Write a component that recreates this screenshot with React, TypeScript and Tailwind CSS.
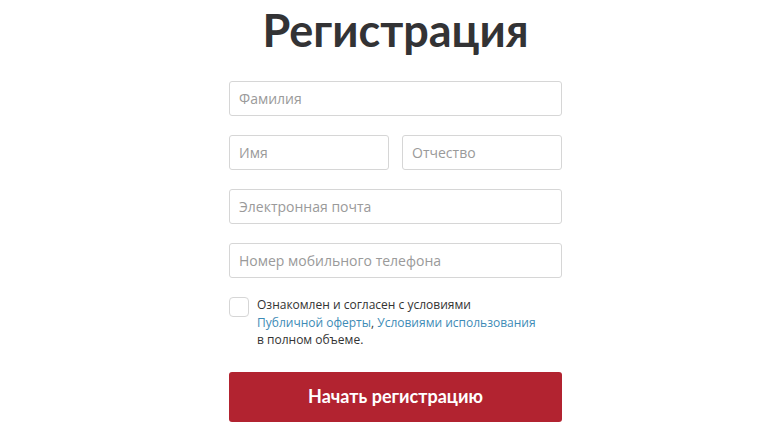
const Field = ({placeholder, className = ''}: {placeholder: string; className?: string}) => (
	<input
		type="text"
		placeholder={placeholder}
		className={`h-[35px] rounded-[3px] border border-[#d6d6d6] bg-white px-[9px] text-[14px] text-[#333] placeholder:text-[#9a9a9a] focus:outline-none ${className}`}
	/>
)

export default function App() {
	return (
		<div className="flex min-h-[436px] justify-center bg-white pl-[25px]" style={{fontFamily: '"Open Sans", "Noto Sans", sans-serif'}}>
			<div className="flex w-[333px] flex-col items-center">
				<h1 className="mt-[4px] whitespace-nowrap font-['Lato',sans-serif] text-[45px] font-bold leading-[52px] text-[#333335]">Регистрация</h1>
				<form className="mt-[25px] flex w-full flex-col gap-[19px]" onSubmit={(e) => e.preventDefault()}>
					<Field placeholder="Фамилия" className="w-full" />
					<div className="flex gap-[13px]">
						<Field placeholder="Имя" className="w-[160px]" />
						<Field placeholder="Отчество" className="w-[160px]" />
					</div>
					<Field placeholder="Электронная почта" className="w-full" />
					<Field placeholder="Номер мобильного телефона" className="w-full" />
					<label className="flex gap-[8px] pt-0">
						<span className="h-[20px] w-[20px] shrink-0 rounded-[4px] border border-[#d6d6d6] bg-white"></span>
						<span className="-mt-[1px] text-[12px] leading-[17.5px] text-[#333]">
							Ознакомлен и согласен с условиями
							<br />
							<a className="text-[#3d8bb6]">Публичной оферты</a>, <a className="text-[#3d8bb6]">Условиями использования</a>
							<br />в полном объеме.
						</span>
					</label>
					<button type="submit" className="mt-[4px] h-[50px] w-full rounded-[3px] bg-[#b22330] font-['Lato',sans-serif] text-[18px] font-bold text-white">
						Начать регистрацию
					</button>
				</form>
			</div>
		</div>
	)
}
